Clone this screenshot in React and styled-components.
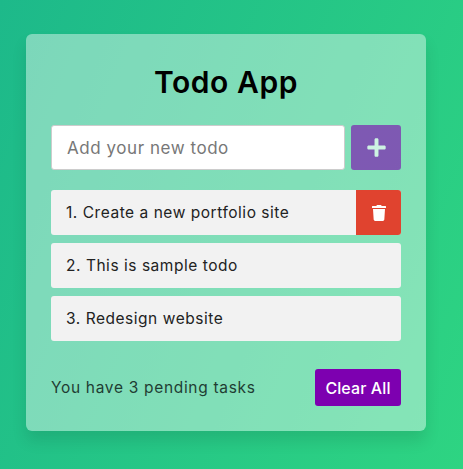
import React from "react";
import styled, { createGlobalStyle } from "styled-components";
import { FaPlus, FaTrash } from "react-icons/fa";

const GlobalStyle = createGlobalStyle`
  * {
    margin: 0;
    padding: 0;
    box-sizing: border-box;
  }

  body {
    font-family: "Inter", "Noto Sans", sans-serif;
  }
`;

const Page = styled.div`
  height: 469px;
  padding: 34px 0 0 26px;
  overflow: hidden;
  background: linear-gradient(112deg, #1db98a, #2ed482);
`;

const Card = styled.div`
  width: 400px;
  height: 397px;
  padding: 29px 25px 25px;
  border-radius: 6px;
  background: rgba(255, 255, 255, 0.42);
  box-shadow: 0 10px 15px rgba(0, 0, 0, 0.1);
`;

const Title = styled.h1`
  height: 38px;
  margin-bottom: 24px;
  font-size: 30px;
  line-height: 38px;
  font-weight: 600;
  letter-spacing: 0.55px;
  text-align: center;
  color: #000;
`;

const InputRow = styled.div`
  display: flex;
  gap: 6px;
  height: 45px;
  margin-bottom: 20px;
`;

const TodoInput = styled.input`
  flex: 1;
  min-width: 0;
  height: 100%;
  padding: 0 15px;
  font-family: inherit;
  font-size: 17px;
  letter-spacing: 0.55px;
  color: #222;
  background: #fff;
  border: 1px solid #ccc;
  border-radius: 3px;
  outline: none;

  &::placeholder {
    color: #777;
    opacity: 1;
  }
`;

const AddButton = styled.button`
  display: flex;
  align-items: center;
  justify-content: center;
  width: 50px;
  height: 100%;
  font-size: 21px;
  color: #fff;
  background: #7d00b0;
  border: none;
  border-radius: 3px;
  opacity: 0.6;
`;

const TodoList = styled.ul`
  display: flex;
  flex-direction: column;
  gap: 8px;
  list-style: none;
`;

const TodoItem = styled.li`
  position: relative;
  display: flex;
  align-items: center;
  height: 45px;
  padding-left: 15px;
  overflow: hidden;
  font-size: 15.5px;
  letter-spacing: 0.53px;
  color: #222;
  background: #f2f2f2;
  border-radius: 3px;
`;

const DeleteButton = styled.button`
  position: absolute;
  top: 0;
  right: 0;
  display: flex;
  align-items: center;
  justify-content: center;
  width: 45px;
  height: 100%;
  font-size: 16px;
  color: #fff;
  background: #e0432f;
  border: none;
`;

const Footer = styled.div`
  display: flex;
  align-items: center;
  justify-content: space-between;
  margin-top: 28px;
`;

const Pending = styled.span`
  font-size: 15.5px;
  letter-spacing: 0.68px;
  color: #1f3d33;
`;

const ClearButton = styled.button`
  width: 86px;
  height: 37px;
  font-family: inherit;
  font-size: 16px;
  font-weight: 500;
  letter-spacing: 0.1px;
  color: #fff;
  background: #7d00b0;
  border: none;
  border-radius: 3px;
`;

const todos = ["Create a new portfolio site", "This is sample todo", "Redesign website"];

export default function App() {
  return (
    <Page>
      <GlobalStyle />
      <Card>
        <Title>Todo App</Title>
        <InputRow>
          <TodoInput placeholder="Add your new todo" />
          <AddButton aria-label="Add">
            <FaPlus />
          </AddButton>
        </InputRow>
        <TodoList>
          {todos.map((todo, i) => (
            <TodoItem key={todo}>
              {i + 1}. {todo}
              {i === 0 && (
                <DeleteButton aria-label="Delete">
                  <FaTrash />
                </DeleteButton>
              )}
            </TodoItem>
          ))}
        </TodoList>
        <Footer>
          <Pending>You have {todos.length} pending tasks</Pending>
          <ClearButton>Clear All</ClearButton>
        </Footer>
      </Card>
    </Page>
  );
}
